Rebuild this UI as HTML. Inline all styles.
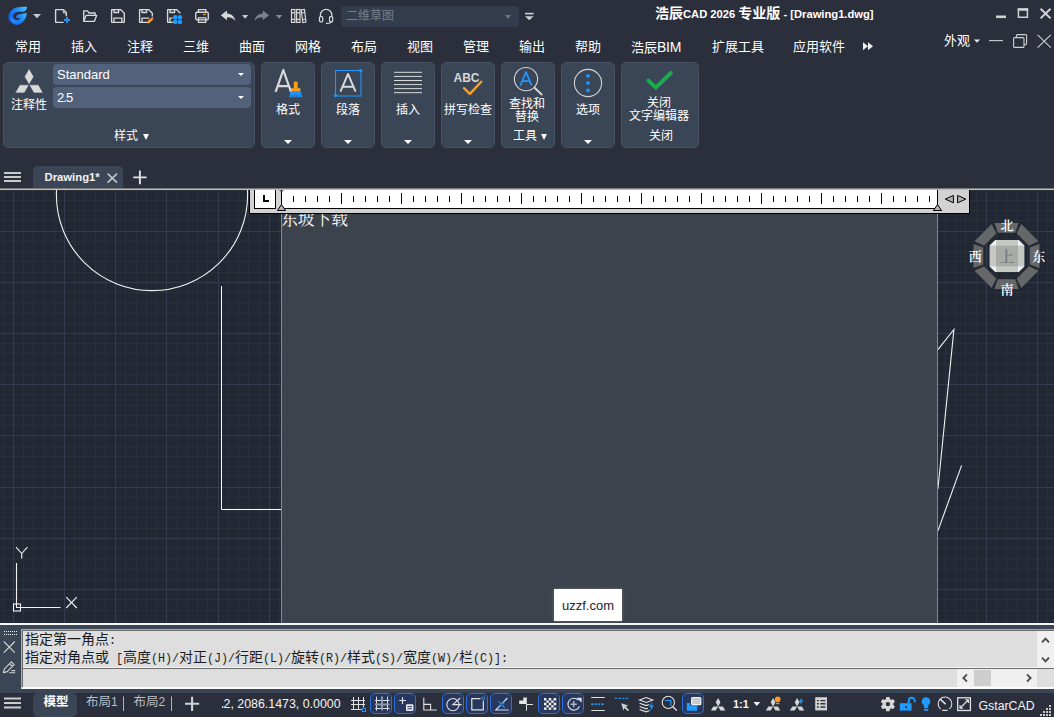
<!DOCTYPE html>
<html lang="zh-CN">
<head>
<meta charset="utf-8">
<title>浩辰CAD 2026 专业版 - [Drawing1.dwg]</title>
<style>
*{box-sizing:border-box;margin:0;padding:0}
html,body{width:1054px;height:717px;overflow:hidden;background:#2a2f3b}
body{position:relative;font-family:"Liberation Sans","Noto Sans CJK SC",sans-serif;color:#f0f0f0;font-size:13px;line-height:1}
.a{position:absolute}
.cj{font-family:"Liberation Sans","Noto Sans CJK SC",sans-serif}
.cjr{font-family:"Liberation Serif","Noto Serif CJK SC",serif}
svg{display:block}
.t{position:absolute;white-space:nowrap;line-height:1}
/* top */
#top{left:0;top:0;width:1054px;height:188px;background:#2a2f3b}
.tl{font-size:11.2px}
.k .cjr{font-weight:600}
.menu .t{top:40px;font-size:13px;color:#fff}
.panel{position:absolute;top:62px;height:86px;background:#3a4556;border:1px solid #465164;border-radius:5px}
.plabel{position:absolute;font-size:12px;color:#fff;text-align:center;white-space:nowrap;line-height:12.4px}
.dd{position:absolute;left:50px;width:198px;height:21px;background:#52627b;border-radius:4px;font-size:13px;color:#fff}
.tri{position:absolute;width:0;height:0;border-left:4px solid transparent;border-right:4px solid transparent;border-top:4px solid #fff}
/* drawing */
#draw{left:0;top:190px;width:1054px;height:433px;background:#222833;overflow:hidden}
/* cmd */
.mo{display:inline-block;font-family:"Liberation Mono",monospace;font-size:13px;transform:scaleX(.8974);transform-origin:0 50%;white-space:pre;vertical-align:baseline}
.cmdl{position:absolute;left:25px;font-size:14px;color:#1c1c1c;white-space:nowrap;line-height:14px;height:14px}
/* status */
.hl{position:absolute;top:693px;width:22px;height:21px;border:1px solid #2f6fd8;background:#27375e;border-radius:5px}
.sr{position:absolute;width:1px;height:1px;overflow:hidden;clip:rect(0 0 0 0);white-space:nowrap}
</style>
</head>
<body>
<div id="top" class="a">
<!-- ===== title bar ===== -->
<svg class="a" style="left:0;top:0" width="1054" height="62" viewBox="0 0 1054 62">
<defs><linearGradient id="lg1" x1="0" y1=".55" x2="1" y2=".1"><stop offset="0" stop-color="#0f5af2"/><stop offset=".45" stop-color="#1d84fb"/><stop offset="1" stop-color="#3cc8ff"/></linearGradient>
<linearGradient id="lg2" x1="0" y1="0" x2=".9" y2="1"><stop offset="0" stop-color="#2fb6ff"/><stop offset="1" stop-color="#1268f4"/></linearGradient></defs>
<!-- logo -->
<path d="M27.2 6.9C20.5 6.6 14.4 7.4 11.3 10.6C8 14.1 7.3 18.8 10.2 22.1C13.2 25.4 17.8 25.9 21.5 22.9C24.9 20.3 26.8 16.6 26.8 13L17.8 14.5C16.5 15.8 15.9 17 16.1 18.1L20.7 18.3C19.9 19.5 17.8 20.4 15.7 19.5C13.2 18.7 12.4 15.8 14 13.7C16.1 11.4 20.7 11.8 24 11.8C26.1 10.4 27 8.7 27.2 6.9Z" fill="url(#lg1)"/>
<path d="M10.9 15.5C10.4 18.5 11 21 13.4 22.7C16 24.5 19.2 24.4 21.5 22.9C24 21.2 25.6 19 26.3 16.5C24.5 19.3 22.3 21 19.4 21.4C15.6 21.9 12 19.5 10.9 15.5Z" fill="url(#lg2)" opacity=".9"/>
<path d="M33 14H41L37 18.2Z" fill="#c6c9d3"/>
<!-- new -->
<g fill="none" stroke="#d9d9d9" stroke-width="1.35" stroke-linejoin="round">
<path d="M66.3 16.3V12.8L63.5 9.6H55.6V22.3H63.6"/>
<path d="M63.3 9.8V12.9H66.2" stroke-width="1"/>
<!-- open -->
<path d="M83.7 21.3V10.9H87.4L89 13H95.1V15.3M83.7 21.3L86.1 15.4H96.6L94.4 21.3Z"/>
<!-- save -->
<path d="M111.6 9.6H120.5L124.3 13.3V22.3H111.6Z"/><path d="M114 9.8V12.5H118.6V9.8M114 22.2V18.1H121.9V22.2"/>
<!-- save as -->
<path d="M148 22.3H139.6V9.6H148.5L152.3 13.3V16.5"/><path d="M142 9.8V12.5H146.6V9.8M142 22.2V18.1H149.2"/>
<!-- save all -->
<path d="M173 22.3H167.6V9.6H176.5L180.3 13.3"/><path d="M170 9.8V12.5H174.6V9.8M170 22.2V18.1H172.4"/>
<!-- print -->
<rect x="195.7" y="12.2" width="12.6" height="7.6" rx="1.2"/><path d="M198.4 12V9.6H205.8V12M198.4 17.9H205.8V22.3H198.4Z"/>
</g>
<path d="M64 20H70M67 17V23" stroke="#2493ee" stroke-width="2"/>
<path d="M148.6 22L152 18.9" stroke="#ffa014" stroke-width="2.6" stroke-linecap="round"/><circle cx="152.8" cy="18.1" r=".9" fill="#ff5a4a"/>
<g fill="#1e9bff"><circle cx="175.2" cy="17.3" r="2.3"/><circle cx="179.9" cy="17.3" r="2.3"/><circle cx="175.2" cy="21.9" r="2.3"/><circle cx="179.9" cy="21.9" r="2.3"/></g>
<path d="M203 14.5H206" stroke="#ffa014" stroke-width="1.2"/>
<!-- undo/redo -->
<path d="M220.8 15.3L227 10.4V13.4C231.6 13.6 234.7 16.5 235.3 20.9C233.4 18.4 230.9 17.3 227 17.3V20.3Z" fill="#d8d8d8"/>
<path d="M242 15H248.2L245.1 18.8Z" fill="#c5cade"/>
<path d="M269 15.3L262.8 10.4V13.4C258.2 13.6 255.1 16.5 254.5 20.9C256.4 18.4 258.9 17.3 262.8 17.3V20.3Z" fill="#7d818c"/>
<path d="M276 15H282.2L279.1 18.8Z" fill="#8c8d92"/>
<!-- books -->
<g fill="none" stroke="#d9d9d9" stroke-width="1.2">
<rect x="291.5" y="9.5" width="3.4" height="12.9"/><path d="M291.5 12.9H294.9M291.5 19.3H294.9"/>
<rect x="296.6" y="9.5" width="3.4" height="12.9"/><path d="M296.6 12.9H300M296.6 19.3H300"/>
<path d="M301.2 9.9L304.4 9.4L306 22L302.8 22.5ZM301.6 12.9L304.8 12.5M302.4 19.4L305.6 19"/>
<!-- headset -->
<path d="M320.4 16.6V15A5.7 5.7 0 0 1 331.8 15V16.6"/>
<rect x="319.5" y="16.6" width="3.2" height="5.2" rx="1"/><rect x="329.5" y="16.6" width="3.2" height="5.2" rx="1"/>
<path d="M331.3 21.8C331 23 329 23.3 326.4 23.3" stroke-linecap="round"/>
</g>
<!-- customise -->
<path d="M525 13.6H533.6" stroke="#d0d0d0" stroke-width="1.6"/><path d="M525 16.2H533.6L529.3 20.3Z" fill="#d0d0d0"/>
<!-- window controls -->
<path d="M996 16.8H1006" stroke="#d0d0d0" stroke-width="2.6"/>
<path d="M1018.4 9.6H1027.4V17.2H1018.4Z" fill="none" stroke="#d0d0d0" stroke-width="1.5"/><path d="M1017.7 9.4H1028.2" stroke="#d0d0d0" stroke-width="2.6"/>
<path d="M1040.6 8.8L1050.6 18.4M1050.6 8.8L1040.6 18.4" stroke="#d4d4d4" stroke-width="2"/>
<!-- second row controls -->
<path d="M974 39.4H980L977 42.8Z" fill="#e8e8e8"/>
<path d="M989 40.6H1003" stroke="#d0d0d0" stroke-width="1.1"/>
<g fill="none" stroke="#d0d0d0" stroke-width="1.1"><rect x="1013.6" y="37.6" width="10.4" height="9.8" rx="1"/><path d="M1016.4 37.4V35.6Q1016.4 34.6 1017.4 34.6H1025.6Q1026.6 34.6 1026.6 35.6V43.6Q1026.6 44.6 1025.6 44.6H1024.2"/></g>
<path d="M1037.6 34.8L1050.8 47.6M1050.8 34.8L1037.6 47.6" stroke="#d0d0d0" stroke-width="1.1"/>
<!-- >> -->
<path d="M863 42.3L868 46.3L863 50.3ZM868 42.3L873 46.3L868 50.3Z" fill="#f0f0f0"/>
</svg>

<div class="a" style="left:341px;top:6px;width:178px;height:21px;background:#343d4e;border-radius:4px"></div>
<div class="t" style="left:346px;top:10px;font-size:12px;color:#757d8c"><span class="cj">二维草图</span></div>
<div class="tri" style="left:505px;top:15px;border-width:4px 3.6px 0 3.6px;border-top-color:#6f7787"></div>
<div class="t" style="left:655px;top:5.5px;font-size:14px;font-weight:bold;color:#fff"><span class="cj">浩辰</span><span class="tl">CAD 2026 </span><span class="cj">专业版</span><span class="tl"> - [Drawing1.dwg]</span></div>
<!-- ===== menu row ===== -->
<div class="menu">
<div class="t" style="left:15px"><span class="cj">常用</span></div>
<div class="t" style="left:71px"><span class="cj">插入</span></div>
<div class="t" style="left:127px"><span class="cj">注释</span></div>
<div class="t" style="left:183px"><span class="cj">三维</span></div>
<div class="t" style="left:239px"><span class="cj">曲面</span></div>
<div class="t" style="left:295px"><span class="cj">网格</span></div>
<div class="t" style="left:351px"><span class="cj">布局</span></div>
<div class="t" style="left:407px"><span class="cj">视图</span></div>
<div class="t" style="left:463px"><span class="cj">管理</span></div>
<div class="t" style="left:519px"><span class="cj">输出</span></div>
<div class="t" style="left:575px"><span class="cj">帮助</span></div>
<div class="t" style="left:631px"><span class="cj">浩辰</span><span style="font-size:14px;letter-spacing:-.3px">BIM</span></div>
<div class="t" style="left:712px"><span class="cj">扩展工具</span></div>
<div class="t" style="left:793px"><span class="cj">应用软件</span></div>
</div>
<div class="t" style="left:944px;top:33.5px;font-size:13px;color:#fff"><span class="cj">外观</span></div>
<!--MENUICONS-->
<!-- ===== ribbon ===== -->
<div class="panel" style="left:3px;width:252px"></div>
<svg class="a" style="left:13px;top:66px" width="32" height="30" viewBox="13 66 32 30"><g fill="#dadada" stroke="#3a4556" stroke-width=".7"><path d="M29.1 84.8L24.4 76.65L29.1 68.5L33.8 76.65Z"/><path d="M29.1 84.8H19.7L15 93H24.4Z"/><path d="M29.1 84.8H38.5L43.2 93H33.8Z"/></g></svg>
<div class="plabel" style="left:5px;top:99px;width:48px"><span class="cj">注释性</span></div>
<div class="dd" style="left:53px;top:64px"><span class="t" style="left:4px;top:3.5px">Standard</span><i class="tri" style="left:185px;top:9px;border-width:3.5px 3.5px 0 3.5px"></i></div>
<div class="dd" style="left:53px;top:87px"><span class="t" style="left:4px;top:3.5px;letter-spacing:-.9px">2.5</span><i class="tri" style="left:185px;top:9px;border-width:3.5px 3.5px 0 3.5px"></i></div>
<div class="plabel" style="left:114px;top:130px"><span class="cj">样式</span></div>
<i class="tri" style="left:143.1px;top:134px;border-width:6px 3.2px 0 3.2px"></i>

<div class="panel" style="left:261px;width:54px"></div>
<svg class="a" style="left:270px;top:66px" width="36" height="34" viewBox="270 66 36 34"><path d="M275.6 91.8L283.3 70L291 91.8M278 86.2H288.6" fill="none" stroke="#dadada" stroke-width="2.2" stroke-linejoin="round"/><rect x="293.8" y="81.6" width="3.9" height="7" fill="#ff9f1a"/><rect x="291" y="88.2" width="9.4" height="3.4" fill="#ff9f1a"/><path d="M290.6 91.6H300.8L302.4 97.2H289.2Z" fill="#1e96ff"/><path d="M292 94.5V97.2M294.6 94.5V97.2M297.2 94.5V97.2M299.8 94.5V97.2" stroke="#3a4556" stroke-width=".7"/></svg>
<div class="plabel" style="left:261px;top:104.2px;width:54px"><span class="cj">格式</span></div>
<i class="tri" style="left:284px;top:140px"></i>

<div class="panel" style="left:321px;width:54px"></div>
<svg class="a" style="left:332px;top:66px" width="34" height="34" viewBox="332 66 34 34"><rect x="335.5" y="70.5" width="25.5" height="25.5" fill="none" stroke="#1e96ff" stroke-width="1.1"/><circle cx="360.8" cy="70.6" r="1.7" fill="#1e96ff"/><circle cx="335.6" cy="95.6" r="1.7" fill="#1e96ff"/><path d="M340.4 91.6L348 74L355.6 91.6M342.6 86.8H353.4" fill="none" stroke="#dadada" stroke-width="1.9" stroke-linejoin="round"/></svg>
<div class="plabel" style="left:321px;top:104.2px;width:54px"><span class="cj">段落</span></div>
<i class="tri" style="left:344px;top:140px"></i>

<div class="panel" style="left:381px;width:54px"></div>
<svg class="a" style="left:392px;top:70px" width="32" height="26" viewBox="392 70 32 26"><path d="M394 72.3H422M394 76.4H422M394 80.5H422M394 84.6H422M394 88.6H422M394 92.7H422" stroke="#dadada" stroke-width="1"/></svg>
<div class="plabel" style="left:381px;top:104.2px;width:54px"><span class="cj">插入</span></div>
<i class="tri" style="left:404px;top:140px"></i>

<div class="panel" style="left:441px;width:54px"></div>
<div class="t" style="left:453.5px;top:72px;font-size:12px;font-weight:bold;color:#d6d6d6">ABC</div>
<svg class="a" style="left:460px;top:78px" width="26" height="20" viewBox="460 78 26 20"><path d="M464 88.2L469.9 93.9L481.3 81.8" fill="none" stroke="#ff9f1a" stroke-width="2.4" stroke-linecap="round" stroke-linejoin="round"/></svg>
<div class="plabel" style="left:441px;top:104.2px;width:54px"><span class="cj">拼写检查</span></div>
<i class="tri" style="left:464px;top:140px"></i>

<div class="panel" style="left:501px;width:54px"></div>
<svg class="a" style="left:512px;top:65px" width="34" height="34" viewBox="512 65 34 34"><circle cx="526" cy="79.1" r="11.6" fill="none" stroke="#d4d4d4" stroke-width="1.1"/><path d="M534.6 87.7L541.6 94.5" stroke="#d4d4d4" stroke-width="2" stroke-linecap="round"/><path d="M520.3 85.6L526 72.2L531.7 85.6M522.2 81.2H529.8" fill="none" stroke="#1e96ff" stroke-width="1.8" stroke-linejoin="round"/></svg>
<div class="plabel" style="left:500px;top:98px;width:54px;line-height:12.6px"><span class="cj">查找和</span><br><span class="cj">替换</span></div>
<div class="plabel" style="left:513px;top:130px"><span class="cj">工具</span></div>
<i class="tri" style="left:541px;top:134px;border-width:6px 3.2px 0 3.2px"></i>

<div class="panel" style="left:561px;width:54px"></div>
<svg class="a" style="left:572px;top:67px" width="32" height="32" viewBox="572 67 32 32"><circle cx="588" cy="83" r="13.6" fill="none" stroke="#d4d4d4" stroke-width="1.1"/><circle cx="588" cy="75.8" r="1.9" fill="#1e96ff"/><circle cx="588" cy="83" r="1.9" fill="#1e96ff"/><circle cx="588" cy="90.3" r="1.9" fill="#1e96ff"/></svg>
<div class="plabel" style="left:561px;top:104.2px;width:54px"><span class="cj">选项</span></div>
<i class="tri" style="left:584px;top:140px"></i>

<div class="panel" style="left:621px;width:78px"></div>
<svg class="a" style="left:644px;top:68px" width="32" height="24" viewBox="644 68 32 24"><path d="M648.4 80.6L655.9 87.7L670.8 73" fill="none" stroke="#1aad4e" stroke-width="3.9" stroke-linecap="round" stroke-linejoin="round"/></svg>
<div class="plabel" style="left:620px;top:96.9px;width:78px;line-height:12.9px"><span class="cj">关闭</span><br><span class="cj">文字编辑器</span></div>
<div class="plabel" style="left:622px;top:129.9px;width:78px"><span class="cj">关闭</span></div>

<!-- ===== document tabs ===== -->
<svg class="a" style="left:0;top:165px" width="160" height="23" viewBox="0 165 160 23"><path d="M4 173H21M4 177H21M4 181H21" stroke="#c9c9c9" stroke-width="1.8"/><path d="M33 188V171Q33 166 38 166H118Q123 166 123 171V188Z" fill="#3a4556"/><path d="M107.6 173.6L117 182.6M117 173.6L107.6 182.6" stroke="#bfc3cb" stroke-width="1.7"/><path d="M133.2 177.4H146.6M139.9 170.6V184.2" stroke="#e2e2e2" stroke-width="1.9"/></svg>
<div class="t" style="left:44.5px;top:171.5px;font-size:11.3px;font-weight:bold;color:#f4f4f4">Drawing1*</div>
<div class="a" style="left:0;top:188px;width:1054px;height:1px;background:#7a7a7a"></div>
<div class="a" style="left:0;top:189px;width:1054px;height:1px;background:#bcbcbc"></div>

</div>
<!-- ===== drawing area ===== -->
<div id="draw" class="a">
<svg class="a" style="left:0;top:0" width="1054" height="433" viewBox="0 190 1054 433">
<path d="M3.5 190V623M23.5 190V623M33.5 190V623M44.5 190V623M54.5 190V623M74.5 190V623M84.5 190V623M95.5 190V623M105.5 190V623M125.5 190V623M136.5 190V623M146.5 190V623M156.5 190V623M177.5 190V623M187.5 190V623M197.5 190V623M207.5 190V623M228.5 190V623M238.5 190V623M248.5 190V623M259.5 190V623M279.5 190V623M289.5 190V623M300.5 190V623M310.5 190V623M330.5 190V623M341.5 190V623M351.5 190V623M361.5 190V623M382.5 190V623M392.5 190V623M402.5 190V623M412.5 190V623M433.5 190V623M443.5 190V623M453.5 190V623M464.5 190V623M484.5 190V623M494.5 190V623M504.5 190V623M515.5 190V623M535.5 190V623M545.5 190V623M556.5 190V623M566.5 190V623M586.5 190V623M597.5 190V623M607.5 190V623M617.5 190V623M638.5 190V623M648.5 190V623M658.5 190V623M668.5 190V623M689.5 190V623M699.5 190V623M709.5 190V623M720.5 190V623M740.5 190V623M750.5 190V623M761.5 190V623M771.5 190V623M791.5 190V623M802.5 190V623M812.5 190V623M822.5 190V623M843.5 190V623M853.5 190V623M863.5 190V623M873.5 190V623M894.5 190V623M904.5 190V623M914.5 190V623M924.5 190V623M945.5 190V623M955.5 190V623M965.5 190V623M976.5 190V623M996.5 190V623M1006.5 190V623M1017.5 190V623M1027.5 190V623M1047.5 190V623M0 190.5H1054M0 200.5H1054M0 210.5H1054M0 220.5H1054M0 241.5H1054M0 251.5H1054M0 261.5H1054M0 272.5H1054M0 292.5H1054M0 302.5H1054M0 313.5H1054M0 323.5H1054M0 343.5H1054M0 353.5H1054M0 364.5H1054M0 374.5H1054M0 394.5H1054M0 405.5H1054M0 415.5H1054M0 425.5H1054M0 446.5H1054M0 456.5H1054M0 466.5H1054M0 476.5H1054M0 497.5H1054M0 507.5H1054M0 517.5H1054M0 528.5H1054M0 548.5H1054M0 558.5H1054M0 569.5H1054M0 579.5H1054M0 599.5H1054M0 610.5H1054M0 620.5H1054" stroke="#293039" stroke-width="1" fill="none"/>
<path d="M13.5 190V623M64.5 190V623M115.5 190V623M166.5 190V623M218.5 190V623M269.5 190V623M320.5 190V623M371.5 190V623M423.5 190V623M474.5 190V623M525.5 190V623M576.5 190V623M627.5 190V623M679.5 190V623M730.5 190V623M781.5 190V623M832.5 190V623M884.5 190V623M935.5 190V623M986.5 190V623M1037.5 190V623M0 231.5H1054M0 282.5H1054M0 333.5H1054M0 384.5H1054M0 435.5H1054M0 487.5H1054M0 538.5H1054M0 589.5H1054" stroke="#343b4c" stroke-width="1" fill="none"/>
<g fill="none" stroke="#f2f2f2" stroke-width="1.1">
<circle cx="152" cy="195" r="95.6"/>
<path d="M221.5 286V509.5H281" stroke="#fff" stroke-width="1"/>
<path d="M937.9 349.7L953.9 329.5L937.9 489"/>
<path d="M961.6 465.4L937.9 530.9"/>
<path d="M16.5 563V607.5H60.6"/><rect x="13.5" y="604" width="7" height="7"/>
<path d="M16 547.2L21.7 553.5L27.4 547.2M21.7 553.5V558.4"/>
<path d="M66.2 597.2L76.8 608M76.8 597.2L66.2 608"/>
</g>
</svg>
<div class="a" style="left:0;top:-190px;width:1054px;height:717px">
<!-- text editor box -->
<div class="a" style="left:281px;top:214px;width:657px;height:409px;background:#3d434c;border-left:1px solid #a58468;border-right:1px solid #a58468"></div>
<div class="t k2" style="left:281.2px;top:212.2px;font-size:16.7px;color:#fafafa"><span class="cjr">东坡下载</span></div>
<!-- ruler -->
<svg class="a" style="left:244px;top:190px" width="732" height="26" viewBox="244 190 732 26" shape-rendering="crispEdges">
<rect x="249" y="190" width="721" height="24" fill="#000"/>
<rect x="250" y="190" width="719" height="23" fill="#d2d2d2"/>
<rect x="254" y="190" width="22" height="19" fill="#000"/><rect x="255" y="190" width="20" height="18" fill="#fff"/>
<path d="M263 195H265V200H269V202H263Z" fill="#000"/>
<rect x="281" y="190" width="657" height="19" fill="#000"/><rect x="282" y="190" width="655" height="18" fill="#fff"/>
<path d="M293.5 196V202M305.5 196V202M317.5 196V202M329.5 196V202M353.5 196V202M365.5 196V202M377.5 196V202M389.5 196V202M413.5 196V202M425.5 196V202M437.5 196V202M449.5 196V202M473.5 196V202M485.5 196V202M497.5 196V202M509.5 196V202M533.5 196V202M545.5 196V202M557.5 196V202M569.5 196V202M593.5 196V202M605.5 196V202M617.5 196V202M629.5 196V202M653.5 196V202M665.5 196V202M677.5 196V202M689.5 196V202M713.5 196V202M725.5 196V202M737.5 196V202M749.5 196V202M773.5 196V202M785.5 196V202M797.5 196V202M809.5 196V202M833.5 196V202M845.5 196V202M857.5 196V202M869.5 196V202M893.5 196V202M905.5 196V202M917.5 196V202M929.5 196V202" stroke="#000" stroke-width="1"/>
<path d="M341.5 192.5V204M401.5 192.5V204M461.5 192.5V204M521.5 192.5V204M581.5 192.5V204M641.5 192.5V204M701.5 192.5V204M761.5 192.5V204M821.5 192.5V204M881.5 192.5V204" stroke="#000" stroke-width="1.2"/>
<g shape-rendering="geometricPrecision" stroke="#000" stroke-width="1" fill="#b2b2b2">
<path d="M281.5 204.6L285.6 210.5H277.4Z"/><path d="M937.5 204.6L941.6 210.5H933.4Z"/>
<path d="M279.6 190L281.5 192L283.4 190" fill="none" stroke="#444"/>
<path d="M945.3 199.1L953.4 195.4V202.8Z"/><path d="M965.8 199.1L957.6 195.4V202.8Z"/>
</g>
</svg>
<!-- watermark -->
<div class="a" style="left:554px;top:589px;width:68px;height:32px;background:#fff;box-shadow:0 0 3px rgba(255,255,255,.25)"></div>
<div class="t" style="left:562px;top:598.8px;font-size:13px;color:#1d2433">uzzf.com</div>
<!-- viewcube -->
<svg class="a" style="left:966px;top:216px" width="84" height="84" viewBox="966 216 84 84">
<path d="M1039.5 268.1L1039.5 243.9L1029.7 247.4L1029.7 264.6ZM1038.4 241.2L1021.3 224.1L1016.8 233.5L1029.0 245.7ZM1018.6 223.0L994.4 223.0L997.9 232.8L1015.1 232.8ZM991.7 224.1L974.6 241.2L984.0 245.7L996.2 233.5ZM973.5 243.9L973.5 268.1L983.3 264.6L983.3 247.4ZM974.6 270.8L991.7 287.9L996.2 278.5L984.0 266.3ZM994.4 289.0L1018.6 289.0L1015.1 279.2L997.9 279.2ZM1021.3 287.9L1038.4 270.8L1029.0 266.3L1016.8 278.5Z" fill="#666769"/>
<path d="M995.2 239.9H1018.8L1024.2 245.3V266.7L1018.8 272.1H995.2L989.8 266.7V245.3Z" fill="#f1f2f1"/>
<path d="M996.0 239.9H1018.0V245.4H996.0ZM996.0 266.6H1018.0V272.1H996.0ZM989.8 245.4H996.0V266.6H989.8ZM1018.0 245.4H1024.2V266.6H1018.0Z" fill="#c5c8c5"/>
<rect x="996.0" y="245.4" width="22.0" height="21.2" fill="#a9aba9"/>
</svg>
<div class="t k" style="left:999.3px;top:248.6px;font-size:15px;color:#767876"><span class="cjr">上</span></div>
<div class="t k" style="left:1000.5px;top:218.8px;font-size:13px;color:#fff"><span class="cjr">北</span></div>
<div class="t k" style="left:968.7px;top:249.8px;font-size:13px;color:#fff"><span class="cjr">西</span></div>
<div class="t k" style="left:1032.3px;top:249.8px;font-size:13px;color:#fff"><span class="cjr">东</span></div>
<div class="t k" style="left:1000.4px;top:282.5px;font-size:13px;color:#fff"><span class="cjr">南</span></div>

</div>

</div>

<!-- ===== command line ===== -->
<div class="a" style="left:0;top:623px;width:1054px;height:2px;background:#f6f6f6"></div>
<div class="a" style="left:0;top:625px;width:1054px;height:68px;background:#3a4556"></div>
<svg class="a" style="left:0;top:628px" width="22" height="50" viewBox="0 628 22 50">
<path d="M4 631.5H17M4 634.5H17" stroke="#f0f0f0" stroke-width="1" stroke-dasharray="1 1" shape-rendering="crispEdges"/>
<path d="M3.8 641.5L14.8 652.6M14.8 641.5L3.8 652.6" stroke="#d4d4d4" stroke-width="1.1"/>
<g fill="none" stroke="#d4d4d4" stroke-width="1.1" stroke-linejoin="round"><path d="M3.4 672.6L4.4 668.8L11.3 661.9L14.1 664.7L7.2 671.6ZM9.6 663.7L12.4 666.5"/><path d="M11.6 670.6H15.2M9.2 672.8H15.2"/></g>
</svg>
<div class="a" style="left:21px;top:629px;width:1033px;height:60px;background:#dedede;border-top:1px solid #a9a9a9;border-left:1px solid #a9a9a9;border-bottom:2px solid #fbfbfb"></div>
<div class="a" style="left:22px;top:630px;width:1032px;height:1px;background:#6d6d6d"></div>
<div class="a" style="left:22px;top:630px;width:1px;height:57px;background:#6d6d6d"></div>
<div class="a" style="left:23px;top:667px;width:1031px;height:1px;background:#f4f4f4"></div>
<div class="a" style="left:22px;top:668px;width:1032px;height:1px;background:#6d6d6d"></div>
<div class="cmdl" style="top:631.8px"><span class="cj">指定第一角点</span><span class="mo" style="width:7px">:</span></div>
<div class="cmdl" style="top:649.9px"><span class="cj">指定对角点或</span><span class="mo" style="width:14px">&nbsp;[</span><span class="cj">高度</span><span class="mo" style="width:28px">(H)/</span><span class="cj">对正</span><span class="mo" style="width:28px">(J)/</span><span class="cj">行距</span><span class="mo" style="width:28px">(L)/</span><span class="cj">旋转</span><span class="mo" style="width:28px">(R)/</span><span class="cj">样式</span><span class="mo" style="width:28px">(S)/</span><span class="cj">宽度</span><span class="mo" style="width:28px">(W)/</span><span class="cj">栏</span><span class="mo" style="width:35px">(C)]:</span></div>
<!-- scrollbars -->
<div class="a" style="left:1037px;top:631px;width:17px;height:36px;background:#f0f0f0"></div>
<div class="a" style="left:957px;top:669px;width:80px;height:18px;background:#f0f0f0"></div>
<div class="a" style="left:974px;top:670px;width:17px;height:16px;background:#cdcdcd"></div>
<svg class="a" style="left:950px;top:630px" width="104" height="58" viewBox="950 630 104 58"><g fill="none" stroke="#4c4c4c" stroke-width="1.9"><path d="M1042 642.4L1045.5 638.6L1049 642.4"/><path d="M1042 657.6L1045.5 661.4L1049 657.6"/><path d="M967 674.4L963.4 678L967 681.6"/><path d="M1027 674.4L1030.6 678L1027 681.6"/></g></svg>

<!-- ===== status bar ===== -->
<div class="a" style="left:0;top:693px;width:1054px;height:24px;background:#2a2f3b"></div>
<div class="a" style="left:33px;top:693px;width:44px;height:24px;background:#3a4556;border-radius:5px"></div>
<div class="t" style="left:43.5px;top:696px;font-size:12.5px;color:#fff"><span class="cj" style="font-weight:bold">模型</span></div>
<div class="t" style="left:86px;top:696px;font-size:12.5px;color:#b9bec9"><span class="cj">布局</span><span style="font-size:12px">1</span></div>
<div class="t" style="left:133.5px;top:696px;font-size:12.5px;color:#b9bec9"><span class="cj">布局</span><span style="font-size:12px">2</span></div>
<div class="t" style="left:223.5px;top:698px;font-size:12.4px;color:#f4f4f4">2, 2086.1473, 0.0000</div>
<div class="t" style="left:733px;top:698.8px;font-size:11px;font-weight:bold;color:#f4f4f4">1:1</div>
<div class="t" style="left:978.5px;top:699.5px;font-size:12.3px;color:#f4f4f4">GstarCAD</div>
<div class="hl" style="left:370px"></div><div class="hl" style="left:394px"></div><div class="hl" style="left:442px"></div><div class="hl" style="left:466px"></div><div class="hl" style="left:490px"></div><div class="hl" style="left:538px"></div><div class="hl" style="left:562px"></div><div class="hl" style="left:682px"></div>
<svg class="a" style="left:0;top:693px" width="1054" height="24" viewBox="0 693 1054 24">
<path d="M4 698.6H21M4 703H21M4 707.4H21" stroke="#cdcdcd" stroke-width="2"/>
<path d="M123.5 696.5V711M171.5 696.5V711" stroke="#b0b5c0" stroke-width="1"/><rect x="222" y="706" width="1.4" height="2" fill="#d8d8d8"/>
<path d="M185 703.8H199.2M192.1 696.7V710.9" stroke="#d2d2d2" stroke-width="2.1"/>
<g fill="none" stroke="#e2e2e2" stroke-width="1.1">
<!-- snap -->
<path d="M353.5 697V710M358.5 697V710M363.5 697V707.4M351 700.5H365M351 704.5H365M351 709.5H361.6" stroke-width="1"/>
<!-- grid -->
<path d="M376.5 696.6V710.6M387.5 696.6V710.6M375 700.5H389.6M375 708.5H389.6" stroke-width="1"/>
<path d="M382 696.6V710.6M375 704.5H389.6" stroke="#8f98ad" stroke-width="2"/>
<!-- dyn -->
<path d="M399.2 700.5H406M402.5 697.2V703.9" stroke-width="1.2"/>
<!-- ortho -->
<path d="M423.8 697.4V710H436.8M424 704.4H430.6V710" stroke-width="1.1"/>
<!-- polar -->
<circle cx="452.9" cy="704.6" r="6.1"/><path d="M461.6 704.6H452.9L460.2 698"/>
<!-- osnap -->
<path d="M480.5 698.7H471.8V709.9H483.3V700.8" stroke-width="1.2"/>
<!-- otrack -->
<path d="M507.4 698L495.8 710H508.8"/>
<!-- lineweight -->
<path d="M526.4 704.5H533M526.5 704.2V710.6" stroke-width="1"/>
<!-- cycle -->
<path d="M578.2 700.2A5.9 5.9 0 1 0 579.4 706.2"/>
<!-- linetype -->
<path d="M591.2 697.5H604.8M591.2 710.5H604.8" stroke-width="1.1"/>
<!-- magnifier -->
<circle cx="668.3" cy="702.4" r="6.1"/><path d="M672.8 706.8L676.8 710.6" stroke-width="1.4"/>
<!-- gauge -->
<path d="M940.6 709A6.8 6.8 0 1 1 949.4 709M942.2 710.4H947.6"/><path d="M945.6 704.2L940 699" stroke-width="1.6"/>
<!-- expand -->
<rect x="957.7" y="697.8" width="12.7" height="12.7" stroke-width="1.3"/><path d="M960.2 708L968.2 700M960 705V708.2H963.2M965.2 699.8H968.4V703"/>
</g>
<rect x="362.3" y="708.3" width="3.2" height="3.2" fill="#10203a" stroke="#1e9bff" stroke-width="1"/>
<rect x="406" y="704.2" width="7.4" height="6.8" rx="1" fill="#eee"/><path d="M407.4 706.6H412M407.4 708.8H412" stroke="#27375e" stroke-width="1"/>
<circle cx="483.4" cy="698.4" r="1.4" fill="none" stroke="#1e9bff" stroke-width="1"/>
<path d="M498.6 701.4L504.8 707.8M504.8 701.4L498.6 707.8" stroke="#1e9bff" stroke-width="1.1"/><circle cx="501.7" cy="704.6" r="1.3" fill="#27375e" stroke="#1e9bff" stroke-width=".9"/>
<path d="M519.2 700.5H523.3V697.4H526.8V703.9H519.2Z" fill="#e6e6e6"/>
<!-- transparency checker -->
<rect x="544" y="698" width="12.2" height="11.8" fill="#f2f2f2"/>
<path d="M546.4 698h2.4v2.4h-2.4zM551.2 698h2.4v2.4h-2.4zM544 700.4h2.4v2.4H544zM548.8 700.4h2.4v2.4h-2.4zM553.6 700.4h2.6v2.4h-2.6zM546.4 702.8h2.4v2.4h-2.4zM551.2 702.8h2.4v2.4h-2.4zM544 705.2h2.4v2.4H544zM548.8 705.2h2.4v2.4h-2.4zM553.6 705.2h2.6v2.4h-2.6zM546.4 707.6h2.4v2.2h-2.4zM551.2 707.6h2.4v2.2h-2.4z" fill="#2b3550"/>
<path d="M576.6 697.8H581.6V702.8Z" fill="#e6e6e6"/><path d="M570.6 704.2H576.8M573.7 701.1V707.3" stroke="#aeb4c4" stroke-width="1.5"/>
<path d="M591.2 704.2H604.8" stroke="#2a8de0" stroke-width="2" stroke-dasharray="2.2 1.2"/>
<path d="M614.8 698.4H629" stroke="#2a8de0" stroke-width="1.2" stroke-dasharray="2.4 1.3"/>
<path d="M621.2 703.2L628.2 705.6L625.8 706.8L629 710L627.8 711.2L624.6 708L623.4 710.4Z" fill="#d0d0d0"/>
<g fill="none" stroke="#e2e2e2" stroke-width="1.1"><path d="M646.2 697.6L652.8 699.9L646.2 702.4L639.6 699.9Z"/><path d="M639.6 703.2L646.2 705.6L649 704.6M639.6 706.4L646.2 708.8L648 708.2M639.6 709.4L646.2 711.8L649.6 710.6"/></g>
<path d="M652.4 701.6L648.8 706.8H651.2L649.8 711.4L654 705.4H651.4Z" fill="#1e9bff"/>
<path d="M664.8 700.5H670.8V706" fill="none" stroke="#1e9bff" stroke-width="1.2"/>
<path d="M686.8 703H690V705.4H697.2V710.8H686.8Z" fill="#1e9bff"/><rect x="691.6" y="697.5" width="9.2" height="7.2" rx="1" fill="#c9c9c9" stroke="#f2f2f2" stroke-width="1.2"/>
<!-- mitsubishi marks -->
<g fill="#d6d6d6"><path id="mm" d="M718.1 706.4L715.7 702.2L718.1 698L720.5 702.2ZM718.1 706.4H713.3L710.9 710.6H715.7ZM718.1 706.4H722.9L725.3 710.6H720.5Z"/><use href="#mm" x="55"/><use href="#mm" x="79"/></g>
<path d="M753.4 702H760.2L756.8 706Z" fill="#f4f4f4"/>
<circle cx="777.7" cy="699.4" r="2.8" fill="#ff9a1a"/><path d="M776 703.6H779.4" stroke="#ff9a1a" stroke-width="1.1"/>
<path d="M802.4 697L798.6 702H800.8L799.4 705.6L803.6 700.4H801.2Z" fill="#1e9bff"/>
<rect x="815.2" y="697.2" width="11.8" height="13.2" fill="#d2d2d2"/><path d="M817 700.6H818.8M820.4 700.6H825.4M817 703.8H818.8M820.4 703.8H825.4M817 707H818.8M820.4 707H825.4" stroke="#2a2f3b" stroke-width="1.4"/>
<!-- gear -->
<path d="M886.5 699.4L886.7 697.5L889.1 697.5L889.3 699.4L891.3 700.6L893.0 699.8L894.2 701.8L892.7 702.9L892.7 705.3L894.2 706.4L893.0 708.4L891.3 707.6L889.3 708.8L889.1 710.7L886.7 710.7L886.5 708.8L884.5 707.6L882.8 708.4L881.6 706.4L883.1 705.3L883.1 702.9L881.6 701.8L882.8 699.8L884.5 700.6Z" fill="#d8d8d8" stroke="#d8d8d8" stroke-width="1.2" stroke-linejoin="round"/><circle cx="887.9" cy="704.1" r="2.2" fill="#2a2f3b"/>
<!-- lock -->
<rect x="899.8" y="703.2" width="11.8" height="7.4" fill="#1e9bff"/><path d="M908.8 703.4V700.8A3 3 0 0 1 914.8 700.8V702.2" fill="none" stroke="#1e9bff" stroke-width="1.9"/><rect x="905.2" y="706.2" width="1.8" height="1.9" fill="#2a2f3b"/>
<!-- bulb -->
<circle cx="926" cy="701.5" r="4.3" fill="#1e9bff"/><rect x="923.9" y="704" width="4.3" height="4.1" fill="#1e9bff"/><rect x="923.9" y="709" width="4.3" height="1.8" fill="#1e9bff"/>
<!-- grip -->
<path d="M1049 705h2v2h-2zM1046 708h2v2h-2zM1049 708h2v2h-2zM1043 711h2v2h-2zM1046 711h2v2h-2zM1049 711h2v2h-2zM1040 714h2v2h-2zM1043 714h2v2h-2zM1046 714h2v2h-2zM1049 714h2v2h-2z" fill="#c9c9c9"/>
</svg>

</body>
</html>
